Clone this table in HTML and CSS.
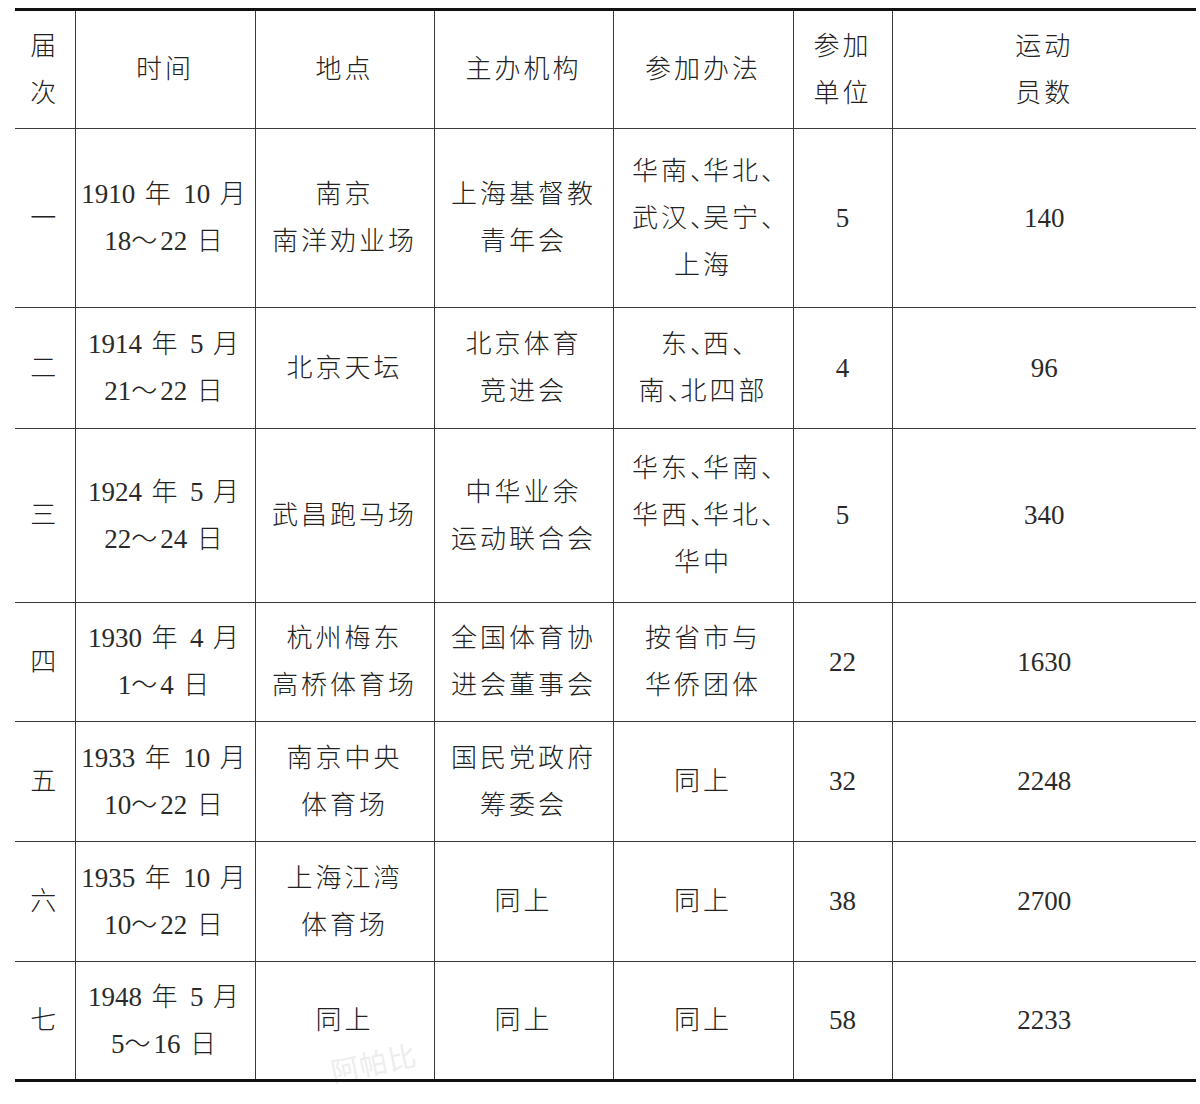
FILE: index.html
```html
<!DOCTYPE html>
<html lang="zh">
<head>
<meta charset="utf-8">
<link rel="stylesheet" href="styles.css">
</head>
<body>
<div class="page">
<div class="wm">阿帕比</div>
<table class="tbl">
<colgroup>
<col class="c1"><col class="c2"><col class="c3"><col class="c4"><col class="c5"><col class="c6"><col class="c7">
</colgroup>
<tr class="h">
<td>届<br>次</td><td>时间</td><td>地点</td><td>主办机构</td><td>参加办法</td><td>参加<br>单位</td><td>运动<br>员数</td>
</tr>
<tr class="r1">
<td>一</td>
<td><span class="n">1910</span> 年 <span class="n">10</span> 月<br><span class="n">18</span>～<span class="n">22</span> 日</td>
<td>南京<br>南洋劝业场</td>
<td>上海基督教<br>青年会</td>
<td>华南<span class="d">、</span>华北<span class="d">、</span><br>武汉<span class="d">、</span>吴宁<span class="d">、</span><br>上海</td>
<td class="n">5</td><td class="n">140</td>
</tr>
<tr class="r2">
<td>二</td>
<td><span class="n">1914</span> 年 <span class="n">5</span> 月<br><span class="n">21</span>～<span class="n">22</span> 日</td>
<td>北京天坛</td>
<td>北京体育<br>竞进会</td>
<td>东<span class="d">、</span>西<span class="d">、</span><br>南<span class="d">、</span>北四部</td>
<td class="n">4</td><td class="n">96</td>
</tr>
<tr class="r3">
<td>三</td>
<td><span class="n">1924</span> 年 <span class="n">5</span> 月<br><span class="n">22</span>～<span class="n">24</span> 日</td>
<td>武昌跑马场</td>
<td>中华业余<br>运动联合会</td>
<td>华东<span class="d">、</span>华南<span class="d">、</span><br>华西<span class="d">、</span>华北<span class="d">、</span><br>华中</td>
<td class="n">5</td><td class="n">340</td>
</tr>
<tr class="r4">
<td>四</td>
<td><span class="n">1930</span> 年 <span class="n">4</span> 月<br><span class="n">1</span>～<span class="n">4</span> 日</td>
<td>杭州梅东<br>高桥体育场</td>
<td>全国体育协<br>进会董事会</td>
<td>按省市与<br>华侨团体</td>
<td class="n">22</td><td class="n">1630</td>
</tr>
<tr class="r5">
<td>五</td>
<td><span class="n">1933</span> 年 <span class="n">10</span> 月<br><span class="n">10</span>～<span class="n">22</span> 日</td>
<td>南京中央<br>体育场</td>
<td>国民党政府<br>筹委会</td>
<td>同上</td>
<td class="n">32</td><td class="n">2248</td>
</tr>
<tr class="r6">
<td>六</td>
<td><span class="n">1935</span> 年 <span class="n">10</span> 月<br><span class="n">10</span>～<span class="n">22</span> 日</td>
<td>上海江湾<br>体育场</td>
<td>同上</td>
<td>同上</td>
<td class="n">38</td><td class="n">2700</td>
</tr>
<tr class="r7">
<td>七</td>
<td><span class="n">1948</span> 年 <span class="n">5</span> 月<br><span class="n">5</span>～<span class="n">16</span> 日</td>
<td>同上</td>
<td>同上</td>
<td>同上</td>
<td class="n">58</td><td class="n">2233</td>
</tr>
</table>
</div>
</body>
</html>
```

FILE: styles.css
```css
html, body {
  margin: 0;
  padding: 0;
  background: #ffffff;
}
.page {
  position: relative;
  width: 1200px;
  height: 1104px;
  padding: 8px 0 0 15px;
  box-sizing: border-box;
}
.tbl {
  position: relative;
  border-collapse: collapse;
  table-layout: fixed;
  width: 1181px;
  font-family: "Liberation Serif", "Noto Sans CJK SC", serif;
  font-size: 26px;
  font-weight: 300;
  color: #222;
  letter-spacing: 3px;
  line-height: 47px;
}
.c1 { width: 60px; }
.c2 { width: 180px; }
.c3 { width: 179px; }
.c4 { width: 179px; }
.c5 { width: 180px; }
.c6 { width: 99px; }
.c7 { width: 304px; }
.tbl td {
  padding: 0;
  text-align: center;
  vertical-align: middle;
  border: 1px solid #3a3a3a;
  white-space: nowrap;
}
.tbl td:first-child { border-left: none; }
.tbl td:last-child { border-right: none; }
.tbl tr.h td { border-top: 3px solid #111; }
.tbl tr.r7 td { border-bottom: 3px solid #111; }
.n {
  font-size: 27px;
  letter-spacing: 0;
  font-weight: 400;
  color: #2a2a2a;
}
.d {
  font-feature-settings: "halt";
  letter-spacing: 0;
}
.h { height: 119px; }
.r1 { height: 179px; }
.r2 { height: 121px; }
.r3 { height: 174px; }
.r4 { height: 119px; }
.r5 { height: 120px; }
.r6 { height: 120px; }
.r7 { height: 119px; }
.wm {
  position: absolute;
  left: 330px;
  top: 1046px;
  font-family: "Noto Sans CJK SC", sans-serif;
  font-size: 28px;
  line-height: 32px;
  color: #ededed;
  transform: rotate(-12deg);
  letter-spacing: 1px;
}
```
